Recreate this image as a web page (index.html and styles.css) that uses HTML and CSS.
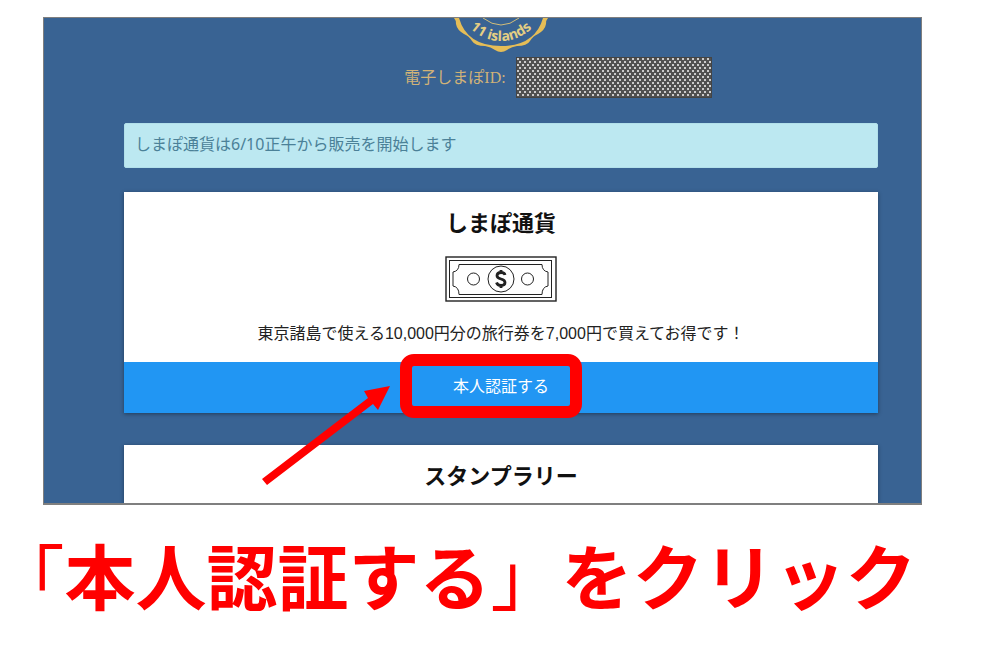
FILE: index.html
```html
<!DOCTYPE html>
<html lang="ja">
<head>
<meta charset="utf-8">
<title>しまぽ通貨</title>
<link rel="stylesheet" href="styles.css">
</head>
<body>
<main class="guide">
  <section class="screen">
    <header class="account">
      <svg class="badge" viewBox="0 0 100 38" role="img" aria-label="11 islands">
        <path class="badge-rim" fill-rule="evenodd" d="M3 0Q5 2 5 6Q6 12 13 16Q18 18 21 23Q24 28 34 28Q40 29 44 32Q50 36 56 32Q60 29 66 28Q76 28 79 23Q82 18 87 16Q94 12 95 6Q95 2 97 0L92 0Q84 28 50 28Q16 28 8 0Z"/>
        <path class="badge-line" d="M32 0Q50 14 68 0"/>
        <path id="badge-curve" fill="none" d="M13 4Q29 23 50 23Q71 23 87 4"/>
        <text class="badge-text"><textPath href="#badge-curve" startOffset="50%" text-anchor="middle">11 islands</textPath></text>
      </svg>
      <p class="account-id"><span>電子しまぽID:</span><span class="redaction"></span></p>
    </header>
    <p class="notice">しまぽ通貨は6/10正午から販売を開始します</p>
    <article class="card">
      <h2 class="card-title">しまぽ通貨</h2>
      <svg class="bill" viewBox="0 0 112 46" aria-hidden="true">
        <rect x="1" y="1" width="110" height="44" stroke-width="1.4"/>
        <rect x="4.500" y="4.500" width="102" height="37"/>
        <path d="M14 8.500H97Q97 15 103 16V30Q97 31 97 38.500H14Q14 31 8 30V16Q14 15 14 8.500Z"/>
        <circle cx="28.500" cy="23" r="6"/>
        <circle cx="82.500" cy="23" r="6"/>
        <circle cx="56" cy="23" r="13"/>
        <path stroke-width="2.800" d="M60 19Q59.500 16.500 56 16.500Q52 16.500 52 19.800Q52 22 56 23Q60 24 60 26.500Q60 29.500 56 29.500Q52.500 29.500 51.500 26.500M56 14V17M56 29V32"/>
      </svg>
      <p class="card-text">東京諸島で使える10,000円分の旅行券を7,000円で買えてお得です！</p>
      <div class="action">
        <button class="verify" type="button">本人認証する</button>
        <span class="highlight"></span>
        <svg class="arrow" viewBox="0 0 128 102" aria-hidden="true">
          <path d="M-1 94L105 13L101 6L127 1L115 25L110 19L4 100Z"/>
        </svg>
      </div>
    </article>
    <article class="card">
      <h2 class="card-title">スタンプラリー</h2>
    </article>
  </section>
  <h1 class="caption"><span class="bracket bracket-open">「</span>本人認証する<span class="bracket">」</span>をクリック</h1>
</main>
</body>
</html>
```

FILE: styles.css
```css
* {
  box-sizing: border-box;
}

body {
  margin: 0;
  background: #fff;
  color: #222;
  font: 16px/24px "Liberation Sans", "Noto Sans CJK JP", sans-serif;
}

h1,
h2,
p {
  margin: 0;
}

.guide {
  padding: 17px 78px 24px 43px;
}

.screen {
  display: flex;
  flex-direction: column;
  overflow: hidden;
  padding: 0 43px 0 80px;
  border: 1px solid #7f7f7f;
  border-bottom-width: 2px;
  background: #396393;
}

.account {
  display: flex;
  flex-direction: column;
  align-items: center;
}

.badge {
  display: block;
  width: 100px;
  height: 38px;
  overflow: visible;
}

.badge-rim {
  fill: #e5bd57;
}

.badge-line {
  fill: none;
  stroke: #d2bd79;
  stroke-width: 1;
}

.badge-text {
  fill: #e5cf83;
  font: bold 14px "Open Sans", sans-serif;
}

.account-id {
  display: flex;
  align-items: center;
  gap: 10px;
  padding: 1px 0 0 114px;
  color: #d0b278;
  font-family: "Liberation Serif", "Noto Sans CJK JP", serif;
}

.redaction {
  width: 196px;
  height: 41px;
  border: 1px solid #444;
  background:
    radial-gradient(circle at 1px 1px, #ccc 0 1px, transparent 1px) 0 0 / 5px 6px,
    radial-gradient(circle at 1px 1px, #ccc 0 1px, transparent 1px) 2px 3px / 5px 6px,
    #505050;
}

.notice {
  margin-top: 25px;
  padding: 8px 10px 11px;
  border: 1px solid #b2e0ea;
  border-radius: 2px;
  background: #bce8f1;
  color: #4b8198;
  font-family: "Noto Sans", "Noto Sans CJK JP", sans-serif;
}

.card {
  margin-top: 24px;
  background: #fff;
  box-shadow: 0 1px 4px rgba(0, 0, 0, 0.4);
  text-align: center;
}

.card + .card {
  margin-top: 32px;
}

.card-title {
  padding: 12px 0;
  color: #111;
  font: bold 22px/34px "Noto Sans CJK JP", sans-serif;
}

.bill {
  display: block;
  width: 112px;
  height: 46px;
  margin: 6px auto 20px;
  fill: none;
  stroke: #222;
  stroke-width: 1;
}

.card-text {
  padding-bottom: 16px;
}

.action {
  position: relative;
}

.verify {
  display: block;
  width: 100%;
  padding: 13px 14px 14px;
  border: 0;
  background: #2196f3;
  color: #fff;
  font: inherit;
}

.highlight {
  position: absolute;
  top: -8px;
  left: calc(50% - 101px);
  width: 182px;
  height: 64px;
  border: 12px solid #f00;
  border-radius: 14px;
  pointer-events: none;
}

.arrow {
  position: absolute;
  top: 23px;
  right: calc(50% + 110px);
  width: 128px;
  height: 102px;
  overflow: visible;
  fill: #f00;
  pointer-events: none;
}

.caption {
  margin: 16px -60px 0 -14px;
  color: #f00;
  font: bold 71px/104px "Noto Sans CJK JP", sans-serif;
  white-space: nowrap;
}

.bracket {
  font-weight: 400;
}

.bracket-open {
  font-feature-settings: "halt";
}
```
